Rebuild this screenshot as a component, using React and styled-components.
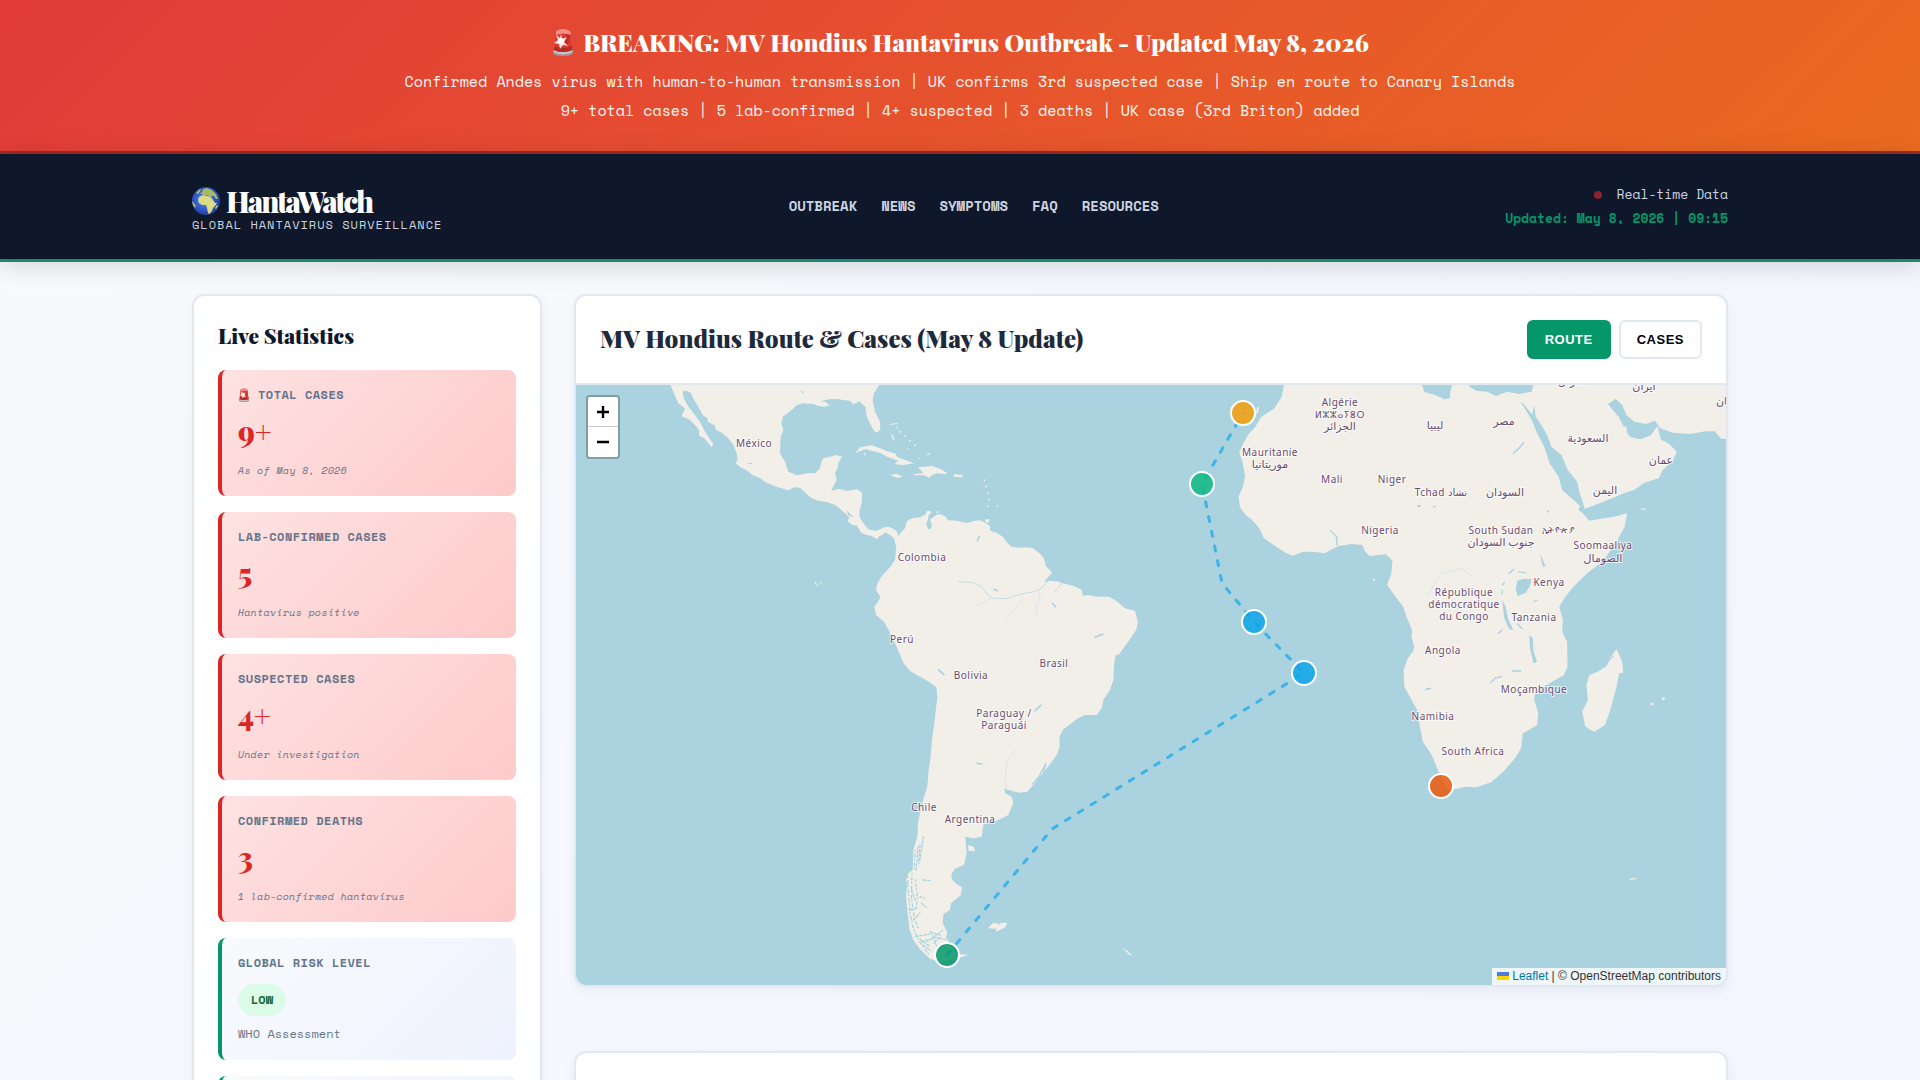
import React, { useState } from 'react';
import styled, { createGlobalStyle, css } from 'styled-components';

const serif = '"Playfair Display", "Liberation Serif", serif';
const mono = '"Space Mono", "Liberation Mono", monospace';
const sans = '"Liberation Sans", Arial, sans-serif';

const GlobalStyle = createGlobalStyle`
  * {
    box-sizing: border-box;
    margin: 0;
    padding: 0;
  }
  body {
    font-family: ${mono};
    background: linear-gradient(135deg, #f8fafc 0%, #eef2ff 160%);
    color: #1e293b;
  }
`;

const Banner = styled.section`
  padding: 24px 32px 26px;
  text-align: center;
  color: #fff;
  background: linear-gradient(135deg, #e13a3a 0%, #ea6a20 100%);
  border-bottom: 3px solid #9a2c2c;
`;
const BannerTitle = styled.h2`
  display: flex;
  align-items: center;
  justify-content: center;
  gap: 8px;
  font-family: ${serif};
  font-size: 24px;
  line-height: 36px;
  font-weight: 900;
  margin-bottom: 7px;
`;
const BannerText = styled.p`
  font-size: 15px;
  line-height: 29px;
  opacity: 0.95;
`;

const Header = styled.header`
  position: relative;
  background: #0f172a;
  border-bottom: 3px solid #1a8a6a;
  box-shadow: 0 4px 24px rgba(0, 0, 0, 0.15);
`;
const Container = styled.div`
  max-width: 1600px;
  margin: 0 auto;
  padding: 0 32px;
`;
const HeaderRow = styled(Container)`
  display: flex;
  align-items: center;
  justify-content: space-between;
  min-height: 105px;
  padding-bottom: 2px;
`;
const Brand = styled.div`
  padding-top: 6px;
`;
const Logo = styled.h1`
  display: flex;
  align-items: center;
  gap: 6px;
  font-family: ${serif};
  font-size: 29px;
  line-height: 32px;
  font-weight: 900;
  letter-spacing: -2px;
  color: #fff;
`;
const Tagline = styled.p`
  font-size: 12px;
  line-height: 16px;
  letter-spacing: 1px;
  text-transform: uppercase;
  color: #cbd5e1;
`;
const Nav = styled.nav`
  display: flex;
  gap: 24px;
`;
const NavLink = styled.a`
  font-size: 14px;
  font-weight: 700;
  text-transform: uppercase;
  text-decoration: none;
  color: #cbd5e1;
`;
const Status = styled.div`
  font-size: 13px;
  line-height: 24px;
  text-align: right;
  color: #cbd5e1;
`;
const LiveDot = styled.span`
  display: inline-block;
  width: 8px;
  height: 8px;
  margin-right: 15px;
  border-radius: 50%;
  background: #8b2232;
`;
const Updated = styled.p`
  font-weight: 700;
  color: #059669;
`;

const Layout = styled(Container)`
  display: grid;
  grid-template-columns: 350px minmax(0, 1fr);
  gap: 32px;
  align-items: start;
  padding-top: 32px;
  padding-bottom: 32px;
`;
const Card = styled.section`
  background: #fff;
  border: 2px solid #e2e8f0;
  border-radius: 12px;
  box-shadow: 0 4px 12px rgba(15, 23, 42, 0.05);
  overflow: hidden;
`;
const Sidebar = styled(Card)`
  display: flex;
  flex-direction: column;
  gap: 16px;
  padding: 24px;
`;
const SidebarTitle = styled.h3`
  margin-bottom: 4px;
  font-family: ${serif};
  font-size: 21px;
  line-height: 30px;
  font-weight: 900;
  color: #0f172a;
`;
const Stat = styled.article`
  min-height: 122px;
  padding: 16px;
  border-left: 4px solid #059669;
  border-radius: 8px;
  background: linear-gradient(135deg, #f8fafc 0%, #eef2ff 100%);
  ${props => props.$alert && css`
    border-left-color: #dc2626;
    background: linear-gradient(135deg, #fee2e2 0%, #fecaca 100%);
  `}
`;
const StatLabel = styled.h4`
  display: flex;
  align-items: center;
  gap: 8px;
  font-size: 12px;
  line-height: 18px;
  letter-spacing: 0.04em;
  text-transform: uppercase;
  color: #64748b;
`;
const StatValue = styled.p`
  margin-top: 6px;
  font-family: ${serif};
  font-size: 29px;
  line-height: 42px;
  font-weight: 900;
  color: #dc2626;
`;
const StatNote = styled.p`
  margin-top: 10px;
  font-size: 10px;
  line-height: 18px;
  letter-spacing: 0.03em;
  font-style: italic;
  color: #64748b;
`;
const Badge = styled.span`
  display: block;
  width: fit-content;
  margin: 12px 0 8px;
  padding: 0 13px;
  border-radius: 16px;
  font-size: 12px;
  line-height: 32px;
  font-weight: 700;
  color: #166534;
  background: #dcfce7;
`;
const Assessment = styled.p`
  font-size: 12px;
  line-height: 20px;
  color: #64748b;
`;

const Main = styled.main`
  display: flex;
  flex-direction: column;
  gap: 64px;
`;
const CardHeader = styled.div`
  display: flex;
  align-items: center;
  justify-content: space-between;
  min-height: 89px;
  padding: 24px;
  border-bottom: 2px solid #e2e8f0;
`;
const CardTitle = styled.h2`
  padding-bottom: 4px;
  font-family: ${serif};
  font-size: 24px;
  line-height: 34px;
  font-weight: 900;
  color: #1e293b;
`;
const Filters = styled.div`
  display: flex;
  gap: 8px;
`;
const FilterButton = styled.button`
  height: 39px;
  padding: 0 16px;
  font-family: ${sans};
  font-size: 13px;
  font-weight: 700;
  letter-spacing: 0.5px;
  color: #000;
  background: #fff;
  border: 2px solid #e2e8f0;
  border-radius: 6px;
  cursor: pointer;
  ${props => props.$active && css`
    color: #fff;
    background: #059669;
    border-color: #059669;
  `}
`;

const MapFrame = styled.div`
  position: relative;
  height: 600px;
  background: #aad3df;
`;
const MapDrawing = styled.svg`
  display: block;
  width: 100%;
  height: 100%;
  font-family: "Noto Sans", "DejaVu Sans", sans-serif;
`;
const ZoomControl = styled.div`
  position: absolute;
  top: 10px;
  left: 10px;
  border: 2px solid rgba(0, 0, 0, 0.25);
  border-radius: 4px;
  background-clip: padding-box;
`;
const ZoomButton = styled.button`
  display: flex;
  align-items: center;
  justify-content: center;
  width: 30px;
  height: 30px;
  border: none;
  background: #fff;
  color: #000;
  cursor: pointer;
  &:first-child {
    border-bottom: 1px solid #ccc;
    border-radius: 2px 2px 0 0;
  }
  &:last-child {
    border-radius: 0 0 2px 2px;
  }
`;
const Attribution = styled.div`
  position: absolute;
  right: 0;
  bottom: 0;
  padding: 0 5px;
  font-family: ${sans};
  font-size: 12px;
  line-height: 17px;
  color: #333;
  background: rgba(255, 255, 255, 0.8);
  a {
    color: #0078a8;
    text-decoration: none;
  }
  svg {
    margin-right: 3px;
  }
`;

const stats = [
  { label: 'Total Cases', value: '9+', note: 'As of May 8, 2026', siren: true },
  { label: 'Lab-Confirmed Cases', value: '5', note: 'Hantavirus positive' },
  { label: 'Suspected Cases', value: '4+', note: 'Under investigation' },
  { label: 'Confirmed Deaths', value: '3', note: '1 lab-confirmed hantavirus' },
];

// map labels: x, baseline y, text
const labels = [
  [178, 62, 'México'],
  [346, 176, 'Colombia'],
  [326, 258, 'Perú'],
  [395, 294, 'Bolivia'],
  [478, 282, 'Brasil'],
  [428, 332, 'Paraguay /'],
  [428, 344, 'Paraguái'],
  [348, 426, 'Chile'],
  [394, 438, 'Argentina'],
  [764, 21, 'Algérie'],
  [764, 33, 'ⵍⵣⵣⴰⵢⴻⵔ'],
  [764, 45, 'الجزائر'],
  [694, 71, 'Mauritanie'],
  [694, 83, 'موريتانيا'],
  [756, 98, 'Mali'],
  [816, 98, 'Niger'],
  [865, 111, 'Tchad تشاد'],
  [929, 111, 'السودان'],
  [859, 44, 'ليبيا'],
  [928, 40, 'مصر'],
  [1012, 57, 'السعودية'],
  [1085, 79, 'عمان'],
  [1029, 109, 'اليمن'],
  [997, 0, 'العراق'],
  [1068, 5, 'ایران'],
  [1158, 20, 'پاکستان'],
  [804, 149, 'Nigeria'],
  [925, 149, 'South Sudan'],
  [925, 161, 'جنوب السودان'],
  [982, 148, 'ኢትዮጵያ'],
  [1027, 164, 'Soomaaliya'],
  [1027, 177, 'الصومال'],
  [973, 201, 'Kenya'],
  [888, 211, 'République'],
  [888, 223, 'démocratique'],
  [888, 235, 'du Congo'],
  [958, 236, 'Tanzania'],
  [867, 269, 'Angola'],
  [958, 308, 'Moçambique'],
  [857, 335, 'Namibia'],
  [897, 370, 'South Africa'],
];

// scripts differ in optical size at the same font size
const labelSize = text => {
  if (/^[\u0600-\u06ff]/.test(text)) return 11;
  if (/^[\u1200-\u137f\u2d30-\u2d7f]/.test(text)) return 9;
  return 10;
};

const markers = [
  { name: 'Ushuaia', x: 371, y: 570, color: '#059669' },
  { name: 'Saint Helena', x: 728, y: 288, color: '#0ea5e9' },
  { name: 'Ascension', x: 678, y: 237, color: '#0ea5e9' },
  { name: 'Cape Verde', x: 626, y: 99, color: '#10b981' },
  { name: 'Canary Islands', x: 667, y: 28, color: '#f59e0b' },
  { name: 'Cape Town', x: 865, y: 401, color: '#ea580c' },
];

const LAND = '#f2efe9';
const WATER = '#aad3df';

const Siren = ({ size }) => (
  <svg width={size} height={size * 7 / 6} viewBox="0 0 24 28" aria-hidden="true">
    <path d="M2 22q10-3 20 0v3q-1 3-10 3T2 25z" fill="#a3999b" />
    <path d="M3 23q9 3 18 0v1q-9 4-18 0z" fill="#e2d5d3" />
    <path d="M5 3q7-4 14 0l2 19q-9 4-18 0z" fill="#dc3b33" />
    <path d="M5 3q7-4 14 0l1 4q-8-3-15 0z" fill="#ee9288" />
    <path d="M4 18q9 4 17 0v4q-9 4-18 0z" fill="#b52b27" />
    <path d="M15 6l4 1-2 9-4 3z" fill="#c32c28" />
    <path d="M10 6l1 5 5-2-3 5 4 4-5-1-3 4-1-5-5-1 4-3-2-5 4 3z" fill="#fff" opacity="0.85" />
    <circle cx="10" cy="13" r="3" fill="#fff" />
  </svg>
);

const Globe = () => (
  <svg width="28" height="28" viewBox="0 0 28 28" aria-hidden="true">
    <defs>
      <radialGradient id="sea" cx="0.45" cy="0.45" r="0.58">
        <stop offset="0" stopColor="#5c8fea" />
        <stop offset="0.65" stopColor="#2d57c8" />
        <stop offset="1" stopColor="#213a92" />
      </radialGradient>
    </defs>
    <circle cx="14" cy="14" r="14" fill="url(#sea)" />
    <path d="M6 13l1-3 4-2 4 1 4 1 2 3 2 3 2 0-2 3-2 2-1 3-3 3-1-1-1-5-1-3-4 0-3-2z" fill="#dcd987" />
    <path d="M8 7l2-2 1-3 4-1 5 2 4 4 2 5-2 0-2-3-3 0 1 3-2-2-3-2-3 0-2-1z" fill="#a8b964" />
    <path d="M0 14l2 2 2 3-1 2-2-3zM4 6l4-4 1 1-3 4z" fill="#aec070" />
    <path d="M25 18l1 1-2 3-1-1z" fill="#c6cc7c" />
  </svg>
);

const Americas = () => (
  <>
    <g transform="translate(-6 -95) scale(0.33333)">
      <path
        fill={LAND}
        d="M298 270L304 292 312 310 325 340 345 355 335 378 360 390 378 408 387 420 388 438 402 444 415 460 425 472 430 462 420 448 405 425 392 400 375 375 355 350 341 325 338 304 348 302 362 308 370 325 385 350 398 375 412 385 414 396 434 406 438 420 455 428 472 442 490 465 500 490 503 508 497 520 515 535 530 540 548 556 570 565 590 578 620 590 655 601 672 592 690 593 710 612 725 625 745 632 770 636 795 645 812 658 838 682 833 694 848 706 860 706 872 726 882 733 905 738 922 748 928 738 938 734 945 726 960 735 972 745 978 770 1000 740 984 738 980 722 960 712 945 711 920 722 905 721 895 718 880 700 870 684 868 665 875 640 877 610 862 598 830 603 808 597 783 602 800 570 795 550 804 530 805 518 816 500 800 495 780 500 760 505 755 512 750 535 735 550 720 549 700 552 680 556 655 545 645 515 630 490 632 440 640 420 634 400 640 378 650 372 668 358 680 345 700 340 730 342 745 348 765 350 778 346 768 336 752 334 775 328 800 327 840 333 850 343 868 334 880 345 886 350 890 378 900 400 913 424 922 428 931 418 930 395 915 365 908 330 912 310 930 280 930 270z"
      />
      <g fill={LAND}>
        <path d="M856 490L870 472 905 466 935 476 950 484 975 490 983 502 1005 510 1032 520 1000 525 973 523 985 512 955 502 930 488 905 482 888 478 868 484z" />
        <path d="M1028 553L1060 550 1044 532 1060 530 1085 528 1110 536 1131 549 1128 553 1100 550 1085 556 1076 564 1064 556 1035 556z" />
        <path d="M960 555L980 551 998 560 982 564zM1151 553L1180 555 1174 562 1152 560zM1247 687L1258 688 1256 698 1246 697z" />
        <path d="M958 402L982 399 982 403 960 404zM962 430L970 438 974 454 968 448zM978 407L984 412 982 418z" />
        <path d="M880 490L888 490 885 498zM1066 492L1082 490 1078 495zM1010 470L1022 482 1014 478zM1042 503L1050 504 1046 508z" />
      </g>
      <g stroke={LAND} strokeWidth="5" strokeLinecap="round" strokeDasharray="1 19" fill="none">
        <path d="M1243 570L1250 595 1257 620 1257 635 1250 658M1102 666L1120 674M1282 648h1" />
        <path d="M736 878h14M742 885h6M752 878l6 4M990 425l50 45" />
      </g>
      <path d="M830 660L840 672 848 679 846 682 834 674zM534 519h12v3h-12zM693 302l8 4-4 6z" fill={WATER} />
    </g>
    <g transform="translate(264 95) scale(0.33333)">
      <path
        fill={LAND}
        d="M128 146L140 142 152 146 165 160 176 168 182 158 195 145 200 125 208 118 225 113 240 112 256 104 260 94 272 92 274 98 266 106 264 120 258 130 264 146 270 148 276 138 270 118 282 110 290 104 302 103 318 110 324 121 350 122 368 127 382 129 400 123 420 121 438 130 450 138 450 152 470 158 488 170 500 186 514 200 535 203 560 202 580 205 600 221 612 235 617 258 632 272 636 280 624 292 612 306 628 302 650 304 668 310 690 315 710 322 725 330 729 348 745 345 770 350 805 350 825 360 840 372 855 385 885 392 893 425 890 447 870 478 850 505 836 524 826 526 822 560 820 600 810 630 790 660 785 685 770 705 735 705 714 715 700 725 670 748 658 770 659 800 650 825 628 855 600 890 580 915 562 935 535 938 505 930 492 926 496 940 515 950 520 970 505 1005 470 1022 440 1028 430 1036 425 1070 400 1075 376 1070 380 1120 372 1155 345 1166 334 1182 336 1198 350 1213 366 1222 362 1245 345 1260 333 1270 330 1290 310 1302 308 1330 322 1357 318 1372 330 1390 350 1422 385 1424 350 1436 300 1446 270 1436 240 1408 220 1380 208 1345 203 1300 198 1250 202 1212 198 1200 205 1180 218 1170 220 1110 232 1070 235 1020 244 985 252 950 262 920 266 870 272 830 276 780 284 720 292 650 289 622 262 602 210 573 190 548 170 500 152 462 132 425 108 405 103 380 122 352 108 330 112 310 125 288 150 262 165 240 169 200 165 172 145 158 130 157z"
      />
      <g fill={LAND}>
        <path d="M443 1345L460 1328 478 1332 470 1342 484 1328 502 1328 496 1342 480 1350 466 1355 470 1346z" />
        <path d="M843 1402L862 1412 876 1426 870 1426 856 1412z" />
        <path d="M384 1096L402 1100 404 1114 386 1112z" />
      </g>
      <g fill="none" stroke={WATER} strokeLinecap="round">
        <path d="M355 305L400 308 425 320 442 343 460 355 500 356 545 341 580 336 605 325 630 296M645 335L665 310" strokeWidth="2" />
        <path d="M455 354L420 372 400 376M548 342L545 362 520 390 495 420M598 330L600 355 588 375 592 410M530 805L500 845 495 900 500 925" strokeWidth="1" />
        <path d="M296 570L312 584M462 328L472 332M412 850L426 852M412 182L418 170M638 370L646 380M765 472L788 463M586 692L602 676" strokeWidth="5" />
        <path d="M592 900L618 850 610 880M578 912L600 886" strokeWidth="4" />
        <path d="M250 1070L240 1140M234 1100L228 1170M240 1095L236 1150M250 1200L270 1202M245 1270L258 1282M240 1250L255 1255M215 1230L225 1260M210 1290L232 1285M220 1320L240 1300M225 1370L270 1362M245 1385L280 1375M250 1395L272 1412M240 1378L268 1398M270 1355L300 1365M300 1372L280 1390" strokeWidth="4" strokeDasharray="7 6" />
        <path d="M203 1190L206 1240 210 1300 220 1345 238 1385 268 1425M216 1180L214 1250 222 1310 236 1350M226 1110L222 1165M226 1200L232 1250 228 1290" strokeWidth="4" strokeDasharray="3 9 8 7" />
        <path d="M262 1385L310 1350M276 1360L290 1400M284 1372L320 1380" strokeWidth="3" />
      </g>
    </g>
  </>
);

const AfricaAndArabia = () => (
  <g transform="translate(604 -95) scale(0.35714 0.33333)">
    <path
      fill={LAND}
      d="M292 270L290 290 284 322 265 355 240 372 228 380 210 412 190 436 175 465 166 488 176 520 182 560 176 590 164 620 168 652 184 675 200 688 222 715 235 745 270 770 295 788 316 797 345 785 375 785 405 790 425 778 445 768 480 762 510 765 518 784 530 798 555 795 577 793 595 812 592 850 580 885 600 915 625 950 636 985 650 1022 648 1040 656 1070 652 1085 638 1105 626 1140 628 1190 646 1225 664 1260 672 1310 680 1355 705 1395 718 1430 735 1470 745 1496 770 1498 800 1490 830 1492 872 1476 905 1445 938 1405 955 1375 960 1330 1000 1305 1003 1270 992 1230 995 1205 1035 1180 1075 1155 1085 1130 1084 1055 1070 1025 1072 990 1062 950 1078 922 1100 892 1140 850 1185 812 1220 760 1245 710 1252 670 1215 680 1170 688 1145 692 1130 672 1116 660 1120 648 1092 620 1070 600 1060 560 1035 520 1020 470 1000 430 985 390 965 355 953 335 962 342 980 366 986 374 992 346 996 380 1010 402 1028 435 1040 470 1068 495 1086 540 1112 575 1118 605 1126 630 1133 656 1175 640 1220 620 1250 607 1272 600 1300 578 1340 565 1352 540 1380 510 1391 485 1370 462 1346 448 1337 408 1318 436 1290 448 1262 442 1252 430 1250 408 1243 410 1228 380 1198 342 1220 327 1238 345 1250 375 1272 395 1305 402 1330 392 1345 415 1380 428 1430 432 1470 424 1498 424 1515 446 1570 450 1570 270z"
    />
    <path fill={WATER} d="M662 270L680 290 684 306 715 315 740 328 755 325 757 305 766 270zM803 270L812 292 830 302 860 305 885 318 915 305 950 312 985 305 992 270z" />
    <g fill={LAND}>
      <path d="M1222 1078L1230 1095 1238 1115 1241 1148 1230 1150 1222 1190 1205 1260 1190 1305 1160 1325 1135 1310 1126 1265 1142 1230 1138 1185 1146 1155 1168 1146 1195 1128 1208 1098z" />
      <path d="M1288 655L1307 657 1296 661zM216 352L222 350 218 368 212 372zM1318 1238h8v8h-8zM1350 1222h7v8h-7zM540 866h6v6h-6zM1255 1766l20-2 6 3-20 2z" />
    </g>
    <g fill={WATER}>
      <path d="M944 873L962 866 984 868 980 888 968 908 946 918 940 900z" />
      <path d="M902 930L912 950 918 985 933 1020 922 1018 908 985zM978 1035L988 1045 990 1085 1000 1115 990 1120 980 1075zM1008 792L1014 805 1023 828 1016 830z" />
      <path d="M665 645h8v6h-8zM708 648h8v4h-8zM1026 662l8 0-2 8zM690 1194L706 1193 700 1198 684 1202z" />
    </g>
    <g fill="none" stroke={WATER} strokeWidth="4" strokeLinecap="round">
      <path d="M934 490L950 474 962 458M922 850L935 838M903 885L908 878M945 1002L958 1016M870 1178L882 1164 900 1160M930 1143h24M892 1030L902 1020M440 765L438 740 422 722" />
      <path d="M695 915L730 850 790 836 820 860" strokeWidth="1" />
      <path d="M1122 1066L1130 1078M1204 1110L1214 1098M945 845L968 848M990 935L1000 930M902 900v12" strokeWidth="3" />
    </g>
  </g>
);

const OutbreakMap = () => (
  <MapFrame>
    <MapDrawing viewBox="0 0 1150 600" preserveAspectRatio="xMidYMid slice" role="img" aria-label="Ship route and case locations">
      <Americas />
      <AfricaAndArabia />
      <g letterSpacing="0.03em" textAnchor="middle" fill="#6b4a70" stroke="#fff" strokeOpacity="0.7" strokeWidth="2" paintOrder="stroke">
        {labels.map(([x, y, text]) => (
          <text key={text} x={x} y={y} fontSize={labelSize(text)}>{text}</text>
        ))}
      </g>
      <path
        d="M371 570L476 444 728 288 678 237 646 198 626 99 667 28"
        fill="none"
        stroke="#0ea5e9"
        strokeOpacity="0.7"
        strokeWidth="3"
        strokeLinecap="round"
        strokeDasharray="5 10"
      />
      {markers.map(({ name, x, y, color }) => (
        <circle key={name} cx={x} cy={y} r="12" fill={color} fillOpacity="0.85" stroke="#fff" strokeWidth="2" />
      ))}
    </MapDrawing>
    <ZoomControl>
      <ZoomButton type="button" aria-label="Zoom in">
        <svg width="14" height="14" viewBox="0 0 14 14"><path d="M7 1v12M1 7h12" stroke="currentColor" strokeWidth="2.4" /></svg>
      </ZoomButton>
      <ZoomButton type="button" aria-label="Zoom out">
        <svg width="14" height="14" viewBox="0 0 14 14"><path d="M1 7h12" stroke="currentColor" strokeWidth="2.4" /></svg>
      </ZoomButton>
    </ZoomControl>
    <Attribution>
      <svg width="12" height="8" viewBox="0 0 12 8" aria-hidden="true">
        <path fill="#4c7be1" d="M0 0h12v4H0z" />
        <path fill="#ffd500" d="M0 4h12v4H0z" />
      </svg>
      <a href="#leaflet">Leaflet</a> | © OpenStreetMap contributors
    </Attribution>
  </MapFrame>
);

const App = () => {
  const [view, setView] = useState('ROUTE');

  return (
    <>
      <GlobalStyle />
      <Banner>
        <BannerTitle>
          <Siren size={24} />
          BREAKING: MV Hondius Hantavirus Outbreak - Updated May 8, 2026
        </BannerTitle>
        <BannerText>
          Confirmed Andes virus with human-to-human transmission | UK confirms 3rd suspected case | Ship en route to Canary Islands
        </BannerText>
        <BannerText>9+ total cases | 5 lab-confirmed | 4+ suspected | 3 deaths | UK case (3rd Briton) added</BannerText>
      </Banner>

      <Header>
        <HeaderRow>
          <Brand>
            <Logo><Globe />HantaWatch</Logo>
            <Tagline>Global Hantavirus Surveillance</Tagline>
          </Brand>
          <Nav>
            {['Outbreak', 'News', 'Symptoms', 'FAQ', 'Resources'].map(item => (
              <NavLink key={item} href={`#${item.toLowerCase()}`}>{item}</NavLink>
            ))}
          </Nav>
          <Status>
            <p><LiveDot />Real-time Data</p>
            <Updated>Updated: May 8, 2026 | 09:15</Updated>
          </Status>
        </HeaderRow>
      </Header>

      <Layout>
        <Sidebar as="aside">
          <SidebarTitle>Live Statistics</SidebarTitle>
          {stats.map(({ label, value, note, siren }) => (
            <Stat key={label} $alert>
              <StatLabel>{siren && <Siren size={12} />}{label}</StatLabel>
              <StatValue>{value}</StatValue>
              <StatNote>{note}</StatNote>
            </Stat>
          ))}
          <Stat>
            <StatLabel>Global Risk Level</StatLabel>
            <Badge>LOW</Badge>
            <Assessment>WHO Assessment</Assessment>
          </Stat>
          <Stat />
        </Sidebar>

        <Main>
          <Card>
            <CardHeader>
              <CardTitle>MV Hondius Route &amp; Cases (May 8 Update)</CardTitle>
              <Filters>
                {['ROUTE', 'CASES'].map(name => (
                  <FilterButton key={name} type="button" $active={view === name} onClick={() => setView(name)}>
                    {name}
                  </FilterButton>
                ))}
              </Filters>
            </CardHeader>
            <OutbreakMap />
          </Card>
          <Card>
            <CardHeader />
          </Card>
        </Main>
      </Layout>
    </>
  );
};

export default App;
